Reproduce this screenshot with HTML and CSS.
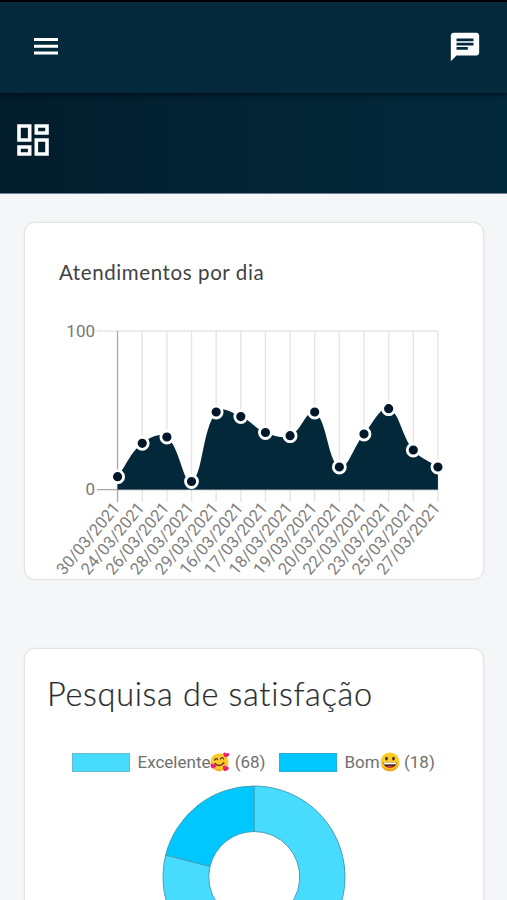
FILE: index.html
```html
<!DOCTYPE html>
<html lang="pt-BR">
<head>
<meta charset="utf-8">
<meta name="viewport" content="width=device-width, initial-scale=1">
<title>Painel</title>
<link rel="stylesheet" href="styles.css">
</head>
<body>
<header class="topbar">
  <svg class="menu-icon" viewBox="0 0 24 17" aria-hidden="true"><path d="M0 0h24v3H0zM0 6.8h24v3H0zM0 13.4h24v3H0z"/></svg>
  <svg class="chat-icon" viewBox="0 0 24 24" aria-hidden="true"><path d="M20 2H4c-1.1 0-2 .9-2 2v18l4-4h14c1.1 0 2-.9 2-2V4c0-1.1-.9-2-2-2zM6 6h12v2H6zm8 8H6v-2h8zm4-3H6V9h12z"/></svg>
</header>
<div class="subbar">
  <svg class="dash-icon" viewBox="0 0 32 32" aria-hidden="true"><path d="M2 2h10.700v14H2zM19.300 2H30v7H19.300zM19.300 16H30v14H19.300zM2 23h10.700v7H2z"/></svg>
</div>
<main class="content">
  <section class="card visits">
    <h2 class="visits-title">Atendimentos por dia</h2>
    <svg class="line-chart" viewBox="24 310 460 268">
      <g class="grid" id="grid"></g>
      <path class="axis" d="M117.500 331V502M97 489.700H438"/>
      <text class="tick" x="95" y="337" text-anchor="end">100</text>
      <text class="tick" x="95" y="495" text-anchor="end">0</text>
      <path class="area" id="area"/>
      <g class="dots" id="dots"></g>
      <g class="dates" id="dates"></g>
    </svg>
  </section>
  <section class="card survey">
    <h2 class="survey-title">Pesquisa de satisfação</h2>
    <div class="legend">
      <span class="swatch great"></span>
      <span class="label first">Excelente<svg class="emoji" viewBox="0 0 20 20" aria-hidden="true">
        <circle cx="9.500" cy="10.200" r="9" fill="#ffc928"/><path d="M1 13c3 5 11 7 16 2-4 5-12 6-16-2z" fill="#f59a23"/>
        <path d="M4.500 8.200q1.500-3 3.200-.6M10.400 7q1.800-2.800 3.200 0" fill="none" stroke="#513425" stroke-width="1.200" stroke-linecap="round"/>
        <path d="M5 11.500q4.800 4.500 8.800-.6" fill="none" stroke="#6b2b20" stroke-width="1.500" stroke-linecap="round"/>
        <path d="M13.400 1.200c1-1.400 2.400-.6 2.600.5 1.400-1.400 3.600-.6 3.200 1.200-.3 1.400-2.300 2-4 2.500-1-1.200-2.500-2.800-1.800-4.200zM.7 12.300c.9-1.500 2.400-.8 2.600.4 1.500-1 3.200-.2 2.800 1.400-.4 1.500-2.100 2-3.900 2.500C1.200 15.300-.1 13.700.7 12.300zM13.200 14.200c1.200-1.300 2.600-.5 2.700.8 1.500-1 3.300 0 2.800 1.700-.5 1.500-2.400 2-4.300 2.500-1-1.500-2.200-3.500-1.200-5z" fill="#f01b76"/></svg> (68)</span>
      <span class="swatch good"></span>
      <span class="label">Bom<svg class="emoji" viewBox="0 0 20 20" aria-hidden="true">
        <circle cx="10" cy="10" r="9.500" fill="#ffca28"/><path d="M.8 12a9.500 9.500 0 0 0 18.400 0Q16 17 10 17T.8 12z" fill="#f7a125"/>
        <ellipse cx="6.500" cy="6.600" rx="1.400" ry="1.900" fill="#493322"/><ellipse cx="13.500" cy="6.600" rx="1.400" ry="1.900" fill="#493322"/>
        <path d="M3.300 10.500h13.400c-.3 7-13.100 7-13.400 0z" fill="#522c23"/><path d="M4 10.500h12v1.800H4z" fill="#fff"/><path d="M6.500 15q3.500-1.800 7 0-3.500 1.500-7 0z" fill="#ef4138"/></svg> (18)</span>
    </div>
    <svg class="donut" viewBox="0 0 184 184">
      <path class="great" d="M92 1A91 91 0 1 1 3.700 70L48 81.400A45.500 45.500 0 1 0 92 46.500Z"/>
      <path class="good" d="M3.700 70A91 91 0 0 1 92 1V46.500A45.500 45.500 0 0 0 48 81.400Z"/>
    </svg>
  </section>
</main>
<script src="chart.js"></script>
</body>
</html>
```
FILE: styles.css
```css
* { box-sizing: border-box; }
body {
  margin: 0;
  height: 900px;
  overflow: hidden;
  display: flex;
  flex-direction: column;
  background: #f5f6f8;
  font-family: Roboto, sans-serif;
}
.topbar {
  flex: none;
  height: 93px;
  padding: 0 26px 0 34px;
  border-top: 2px solid #000;
  display: flex;
  align-items: center;
  justify-content: space-between;
  background: linear-gradient(#05283b, #042a3c);
  box-shadow: 0 1px 5px #000a18;
  z-index: 1;
}
.menu-icon { width: 24px; height: 17px; fill: #fff; margin-top: -3px; }
.chat-icon { width: 34px; height: 34px; fill: #fff; margin: -1px -1px 0 0; }
.subbar {
  flex: none;
  height: 101px;
  padding: 31px 0 0 17px;
  background: linear-gradient(90deg, #021d2b, #022333 45%, #02293b);
  border-bottom: 1px solid #6f8592;
}
.dash-icon { width: 32px; height: 32px; fill: none; stroke: #fff; stroke-width: 3.600; display: block; }
.content { padding: 28px 23px 0 24px; display: flex; flex-direction: column; gap: 68px; }
.card { flex: none; background: #fff; border: 1px solid #e1e4e6; border-radius: 11px; box-shadow: 0 0 2px #e6e9eb; }
.visits { height: 358px; }
.visits-title {
  margin: 36px 0 0 34px;
  height: 27px;
  font: 400 20.500px/27px Lato, sans-serif;
  letter-spacing: .6px;
  color: #404244;
  white-space: nowrap;
}
.line-chart { display: block; width: 460px; height: 268px; margin: 24px 0 0 -1px; }
.grid { stroke: #e6e6e6; stroke-width: 1.400; }
.axis { fill: none; stroke: #a9a9a9; stroke-width: 1.200; }
.tick { font-size: 17px; fill: #777; }
.area { fill: #032839; }
.dots { fill: #02172a; stroke: #fff; stroke-width: 2.800; }
.dates { font-size: 16.600px; fill: #808080; text-anchor: end; }
.survey { height: 430px; }
.survey-title {
  margin: 23px 0 0 22px;
  height: 45px;
  font: 300 32.500px/44px Lato, sans-serif;
  letter-spacing: .67px;
  color: #292b2d;
  -webkit-text-stroke: .2px #292b2d;
  white-space: nowrap;
}
.legend { display: flex; align-items: center; height: 22px; margin: 34px 0 0 47px; }
.swatch { width: 58px; height: 19px; border: 1px solid; flex: none; margin-right: 7.500px; }
.swatch.great { background: #47dcfd; border-color: #67b9cc; }
.swatch.good { background: #00c7ff; border-color: #27afd5; }
.label { display: flex; align-items: center; white-space: pre; font-size: 17px; line-height: 22px; color: #707070; }
.label.first { margin-right: 13.500px; }
.emoji { width: 20px; height: 20px; }
.donut { display: block; width: 184px; height: 184px; margin: 12px 0 0 137px; }
.donut path { stroke: #439fb6; stroke-width: 1; }
.donut .great { fill: #47dcfd; }
.donut .good { fill: #00c7ff; }
```
FILE: chart.js
```js
const days = [
  ["30/03/2021", 476.7], ["24/03/2021", 443.3], ["26/03/2021", 437],
  ["28/03/2021", 481.5], ["29/03/2021", 412], ["16/03/2021", 416.6],
  ["17/03/2021", 432.5], ["18/03/2021", 435.7], ["19/03/2021", 412],
  ["20/03/2021", 467], ["22/03/2021", 434], ["23/03/2021", 408.7],
  ["25/03/2021", 450], ["27/03/2021", 467]
];
const pts = days.map((d, i) => [117.6 + i * 24.64, d[1]]);
const dist = (a, b) => Math.hypot(a[0] - b[0], a[1] - b[1]);

// Tension splines: each point gets one handle per side
const handles = pts.map((p, i) => {
  const a = pts[i - 1] || p, b = pts[i + 1] || p;
  const l = dist(a, p), r = dist(p, b), k = 0.4 / (l + r);
  const dx = b[0] - a[0], dy = b[1] - a[1];
  return [[p[0] - k * l * dx, p[1] - k * l * dy], [p[0] + k * r * dx, p[1] + k * r * dy]];
});
let path = `M${pts[0][0]} 489.5L${pts[0]}`;
for (let i = 1; i < pts.length; i++) path += `C${handles[i - 1][1]} ${handles[i][0]} ${pts[i]}`;
document.getElementById("area").setAttribute("d", path + "V489.5Z");

document.getElementById("grid").innerHTML =
  '<path d="M97 331H438"/>' + pts.map(p => `<path d="M${p[0]} 331V502"/>`).join("");
document.getElementById("dots").innerHTML =
  pts.map(p => `<circle cx="${p[0]}" cy="${p[1]}" r="6"/>`).join("");
document.getElementById("dates").innerHTML =
  pts.map((p, i) => `<text transform="translate(${p[0] - 1.5} 504.5) rotate(-50)" y="6">${days[i][0]}</text>`).join("");
```
